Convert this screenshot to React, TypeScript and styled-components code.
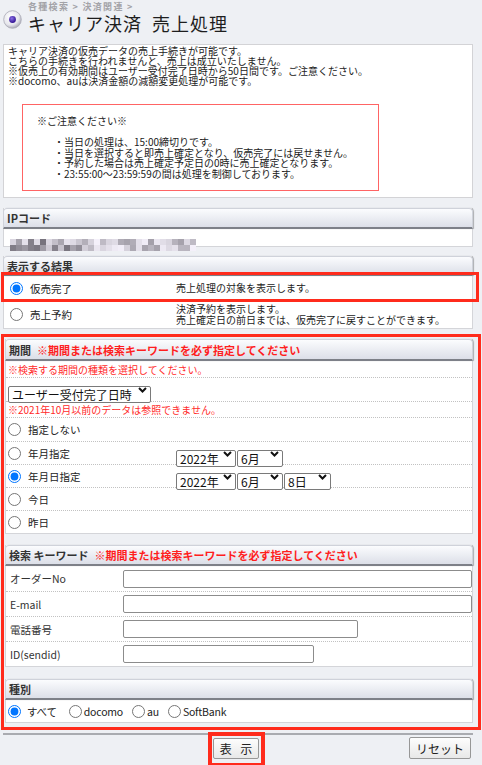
import React from 'react';
import styled, { createGlobalStyle } from 'styled-components';

const Global = createGlobalStyle`
  html, body { margin: 0; padding: 0; background: #eef0f4; }
  body { font-family: "Noto Sans CJK JP", "Noto Sans", sans-serif; color: #222; }
  * { box-sizing: border-box; }
`;

const Page = styled.div`
  width: 470px;
  margin-left: 3px;
  padding-bottom: 10px;
`;

const TitleBar = styled.div`
  display: flex;
  align-items: flex-start;
  gap: 6px;
  height: 44px;
  padding-top: 1px;
`;

const TitleIcon = styled.svg`
  margin-top: 9px;
  flex: none;
`;

const TitleTexts = styled.div`
  display: flex;
  flex-direction: column;
`;

const Crumb = styled.div`
  font-size: 9px;
  line-height: 11px;
  font-weight: bold;
  letter-spacing: 1.3px;
  color: #a3a3a8;
`;

const Title = styled.h1`
  margin: 0;
  font-size: 18px;
  line-height: 22px;
  font-weight: normal;
  letter-spacing: 1px;
  word-spacing: 5px;
  color: #1e1e1e;
`;

const InfoBox = styled.div`
  background: #fff;
  border: 1px solid #d3d3d6;
  padding: 1px 4px 6px;
  font-size: 10px;
  line-height: 10px;
  color: #222;
`;

const InfoLine = styled.div``;

const Notice = styled.div`
  margin: 18px 0 0 14px;
  width: 357px;
  border: 1px solid #ff6464;
  padding: 11px 0 11px 14px;
  line-height: 10.5px;
`;

const NoticeTitle = styled.div`
  margin-bottom: 10.5px;
`;

const Bullets = styled.div`
  padding-left: 17px;
`;

const Panel = styled.section<{ $mt?: number }>`
  margin-top: ${p => p.$mt ?? 0}px;
  background: #fff;
  border: 1px solid #d4d5d9;
  border-top: 0;
`;

const PanelHeader = styled.div<{ $h?: number }>`
  height: ${p => p.$h ?? 21}px;
  margin: 0 -1px;
  display: flex;
  align-items: center;
  gap: 6px;
  padding-left: 3px;
  background: linear-gradient(#fbfcfe, #dcdfe8);
  border: 1px solid #cfd2da;
  border-bottom: 2px solid #7d8088;
  border-radius: 4px 4px 0 0;
  box-shadow: 1px 0 1px rgba(0, 0, 0, 0.28);
  font-size: 11px;
  font-weight: bold;
  color: #333;
`;

const HeaderAlert = styled.span`
  color: #ff1e1e;
`;

const IpBody = styled.div`
  height: 17px;
  padding: 3px 0 0 6px;
`;

const ResultRow = styled.div<{ $h: number; $mark?: boolean }>`
  position: relative;
  height: ${p => p.$h}px;
  display: grid;
  grid-template-columns: 172px 1fr;
  align-items: center;
  ${p =>
    p.$mark
      ? `&::after {
    content: '';
    position: absolute;
    left: -3px; right: -7px; top: -4px; bottom: -1px;
    border: 3px solid #ff2b1c;
    pointer-events: none;
  }`
      : ''}
`;

const OptionCell = styled.label<{ $pad?: number }>`
  display: flex;
  align-items: center;
  gap: 7px;
  padding-left: ${p => p.$pad ?? 6}px;
  font-size: 10.5px;
`;

const Radio = styled.input.attrs({ type: 'radio' })`
  width: 13px;
  height: 13px;
  margin: 0;
  flex: none;
`;

const Desc = styled.div`
  font-size: 10px;
  line-height: 10.5px;
`;

const MarkedWrap = styled.div`
  margin: 5px -8px 0 -2px;
  border: 3px solid #ff2b1c;
  padding: 2px 5px 4px 1px;
`;

const Rows = styled.div`
  & > * + * {
    border-top: 1px dotted #c2c2c2;
  }
`;

const NoteRow = styled.div`
  height: 16px;
  display: flex;
  align-items: center;
  padding-left: 2px;
  font-size: 10px;
  color: #ff2a2a;
`;

const SelectRow = styled.div`
  height: 24px;
  display: flex;
  align-items: center;
  padding-left: 2px;
`;

const SelectWrap = styled.span<{ $w: number }>`
  position: relative;
  display: inline-block;
  width: ${p => p.$w}px;
  height: 17px;
`;

const Select = styled.select`
  appearance: none;
  -webkit-appearance: none;
  width: 100%;
  height: 100%;
  font-family: "Noto Sans CJK JP", "Noto Sans", sans-serif;
  font-size: 12px;
  line-height: 15px;
  color: #111;
  padding: 0 12px 0 3px;
  margin: 0;
  background: #fff;
  border: 1px solid #7a7a7a;
  border-radius: 2px;
`;

const Chevron = styled.svg`
  position: absolute;
  right: 4px;
  top: 6px;
  pointer-events: none;
`;

const PeriodRow = styled.div<{ $h: number }>`
  height: ${p => p.$h}px;
  display: grid;
  grid-template-columns: 170px 1fr;
  align-items: center;
`;

const SelectGroup = styled.div`
  display: flex;
  gap: 1px;
`;

const FieldRow = styled.div`
  height: 25px;
  display: grid;
  grid-template-columns: 117px 1fr;
  align-items: center;
`;

const FieldLabel = styled.label`
  padding-left: 4px;
  font-size: 10.5px;
  color: #333;
`;

const TextInput = styled.input<{ $w: number }>`
  width: ${p => p.$w}px;
  height: 18px;
  margin: 0;
  border: 1px solid #8c8c8c;
  border-radius: 2px;
  background: #fff;
`;

const KindRow = styled.div`
  height: 22px;
  display: flex;
  align-items: center;
  padding-left: 2px;
  font-size: 10.5px;
`;

const KindOption = styled.label<{ $gap: number; $ml?: number }>`
  display: flex;
  align-items: center;
  gap: ${p => p.$gap}px;
  margin-left: ${p => p.$ml ?? 0}px;
  letter-spacing: -0.2px;
`;

const Divider = styled.div`
  margin-top: 3px;
  height: 2px;
  background: #a9abb0;
`;

const ButtonBar = styled.div`
  margin-top: 3px;
  display: grid;
  grid-template-columns: 1fr auto 1fr;
  align-items: start;
`;

const Button = styled.button<{ $w: number; $h: number; $mark?: boolean }>`
  position: relative;
  width: ${p => p.$w}px;
  height: ${p => p.$h}px;
  padding: 0;
  font-family: "Noto Sans CJK JP", "Noto Sans", sans-serif;
  font-size: 12px;
  color: #222;
  background: linear-gradient(#fdfdfd, #e8e8e8);
  border: 1px solid #979797;
  border-radius: 2px;
  ${p =>
    p.$mark
      ? `&::after {
    content: '';
    position: absolute;
    left: -6px; right: -7px; top: -7px; bottom: -9px;
    border: 4px solid #ff2b1c;
    pointer-events: none;
  }`
      : ''}
`;

const ShowButton = styled(Button)`
  grid-column: 2;
  letter-spacing: 3px;
  padding-left: 3px;
  margin-right: 4px;
`;

const ResetButton = styled(Button)`
  grid-column: 3;
  justify-self: end;
  margin-right: 2px;
  margin-top: -1px;
`;

const mosaic = (() => {
  const cells: { x: number; y: number; c: string }[] = [];
  let s = 11;
  for (let i = 0; i < 31; i++) {
    for (let j = 0; j < 2; j++) {
      s = (s * 1103515245 + 12345) & 0x7fffffff;
      const r = (s >> 8) % 100;
      let l: number;
      if (i < 12) l = r < 55 ? 125 + r : 200 + (r - 55);
      else l = r < 30 ? 170 + r : 215 + ((r - 30) % 40);
      l = Math.min(l, 250);
      cells.push({ x: i * 6, y: j * 6, c: `rgb(${l - 6},${l - 10},${l})` });
    }
  }
  return cells;
})();

function DropSelect({ w, label }: { w: number; label: string }) {
  return (
    <SelectWrap $w={w}>
      <Select defaultValue="v">
        <option value="v">{label}</option>
      </Select>
      <Chevron width="9" height="6" viewBox="0 0 9 6">
        <path d="M1 1 L4.5 4.5 L8 1" fill="none" stroke="#111" strokeWidth="2" />
      </Chevron>
    </SelectWrap>
  );
}

export default function App() {
  return (
    <>
      <Global />
      <Page>
        <TitleBar>
          <TitleIcon width="19" height="19" viewBox="0 0 19 19">
            <defs>
              <radialGradient id="ring" cx="40%" cy="35%" r="70%">
                <stop offset="0" stopColor="#ffffff" />
                <stop offset="0.65" stopColor="#e6e6ec" />
                <stop offset="1" stopColor="#a0a0ac" />
              </radialGradient>
              <radialGradient id="dot" cx="40%" cy="35%" r="70%">
                <stop offset="0" stopColor="#8b70e6" />
                <stop offset="1" stopColor="#2a0c8c" />
              </radialGradient>
            </defs>
            <circle cx="9.5" cy="9.5" r="8.8" fill="url(#ring)" stroke="#a9a9b5" strokeWidth="0.8" />
            <circle cx="9.5" cy="9.5" r="3.4" fill="url(#dot)" />
          </TitleIcon>
          <TitleTexts>
            <Crumb>各種検索 &gt; 決済関連 &gt;</Crumb>
            <Title>キャリア決済 売上処理</Title>
          </TitleTexts>
        </TitleBar>

        <InfoBox>
          <InfoLine>キャリア決済の仮売データの売上手続きが可能です。</InfoLine>
          <InfoLine>こちらの手続きを行われませんと、売上は成立いたしません。</InfoLine>
          <InfoLine>※仮売上の有効期間はユーザー受付完了日時から50日間です。ご注意ください。</InfoLine>
          <InfoLine>※docomo、auは決済金額の減額変更処理が可能です。</InfoLine>
          <Notice>
            <NoticeTitle>※ご注意ください※</NoticeTitle>
            <Bullets>
              <div>・当日の処理は、15:00締切りです。</div>
              <div>・当日を選択すると即売上確定となり、仮売完了には戻せません。</div>
              <div>・予約した場合は売上確定予定日の0時に売上確定となります。</div>
              <div>・23:55:00～23:59:59の間は処理を制御しております。</div>
            </Bullets>
          </Notice>
        </InfoBox>

        <Panel $mt={10}>
          <PanelHeader>IPコード</PanelHeader>
          <IpBody>
            <svg width="186" height="12" viewBox="0 0 186 12">
              {mosaic.map((m, i) => (
                <rect key={i} x={m.x} y={m.y} width="6" height="6" fill={m.c} />
              ))}
            </svg>
          </IpBody>
        </Panel>

        <Panel $mt={9}>
          <PanelHeader $h={20}>表示する結果</PanelHeader>
          <ResultRow $h={25} $mark>
            <OptionCell>
              <Radio name="result" defaultChecked />
              <span>仮売完了</span>
            </OptionCell>
            <Desc>売上処理の対象を表示します。</Desc>
          </ResultRow>
          <ResultRow $h={27}>
            <OptionCell>
              <Radio name="result" />
              <span>売上予約</span>
            </OptionCell>
            <Desc>
              決済予約を表示します。
              <br />
              売上確定日の前日までは、仮売完了に戻すことができます。
            </Desc>
          </ResultRow>
        </Panel>

        <MarkedWrap>
          <Panel>
            <PanelHeader $h={22}>
              <span>期間</span>
              <HeaderAlert>※期間または検索キーワードを必ず指定してください</HeaderAlert>
            </PanelHeader>
            <Rows>
              <NoteRow>※検索する期間の種類を選択してください。</NoteRow>
              <SelectRow>
                <DropSelect w={143} label="ユーザー受付完了日時" />
              </SelectRow>
              <NoteRow>※2021年10月以前のデータは参照できません。</NoteRow>
              <PeriodRow $h={24}>
                <OptionCell $pad={2}>
                  <Radio name="period" />
                  <span>指定しない</span>
                </OptionCell>
              </PeriodRow>
              <PeriodRow $h={23}>
                <OptionCell $pad={2}>
                  <Radio name="period" />
                  <span>年月指定</span>
                </OptionCell>
                <SelectGroup>
                  <DropSelect w={60} label="2022年" />
                  <DropSelect w={46} label="6月" />
                </SelectGroup>
              </PeriodRow>
              <PeriodRow $h={23}>
                <OptionCell $pad={2}>
                  <Radio name="period" defaultChecked />
                  <span>年月日指定</span>
                </OptionCell>
                <SelectGroup>
                  <DropSelect w={60} label="2022年" />
                  <DropSelect w={46} label="6月" />
                  <DropSelect w={47} label="8日" />
                </SelectGroup>
              </PeriodRow>
              <PeriodRow $h={23}>
                <OptionCell $pad={2}>
                  <Radio name="period" />
                  <span>今日</span>
                </OptionCell>
              </PeriodRow>
              <PeriodRow $h={23}>
                <OptionCell $pad={2}>
                  <Radio name="period" />
                  <span>昨日</span>
                </OptionCell>
              </PeriodRow>
            </Rows>
          </Panel>

          <Panel $mt={11}>
            <PanelHeader>
              <span>検索 キーワード</span>
              <HeaderAlert>※期間または検索キーワードを必ず指定してください</HeaderAlert>
            </PanelHeader>
            <Rows>
              <FieldRow>
                <FieldLabel>オーダーNo</FieldLabel>
                <TextInput $w={349} />
              </FieldRow>
              <FieldRow>
                <FieldLabel>E-mail</FieldLabel>
                <TextInput $w={349} />
              </FieldRow>
              <FieldRow>
                <FieldLabel>電話番号</FieldLabel>
                <TextInput $w={235} />
              </FieldRow>
              <FieldRow>
                <FieldLabel>ID(sendid)</FieldLabel>
                <TextInput $w={191} />
              </FieldRow>
            </Rows>
          </Panel>

          <Panel $mt={12}>
            <PanelHeader>種別</PanelHeader>
            <KindRow>
              <KindOption $gap={6}>
                <Radio name="kind" defaultChecked />
                <span>すべて</span>
              </KindOption>
              <KindOption $gap={2} $ml={12}>
                <Radio name="kind" />
                <span>docomo</span>
              </KindOption>
              <KindOption $gap={2} $ml={9}>
                <Radio name="kind" />
                <span>au</span>
              </KindOption>
              <KindOption $gap={2} $ml={9}>
                <Radio name="kind" />
                <span>SoftBank</span>
              </KindOption>
            </KindRow>
          </Panel>
        </MarkedWrap>

        <Divider />
        <ButtonBar>
          <ShowButton $w={46} $h={21} $mark>表 示</ShowButton>
          <ResetButton $w={62} $h={22}>リセット</ResetButton>
        </ButtonBar>
      </Page>
    </>
  );
}
